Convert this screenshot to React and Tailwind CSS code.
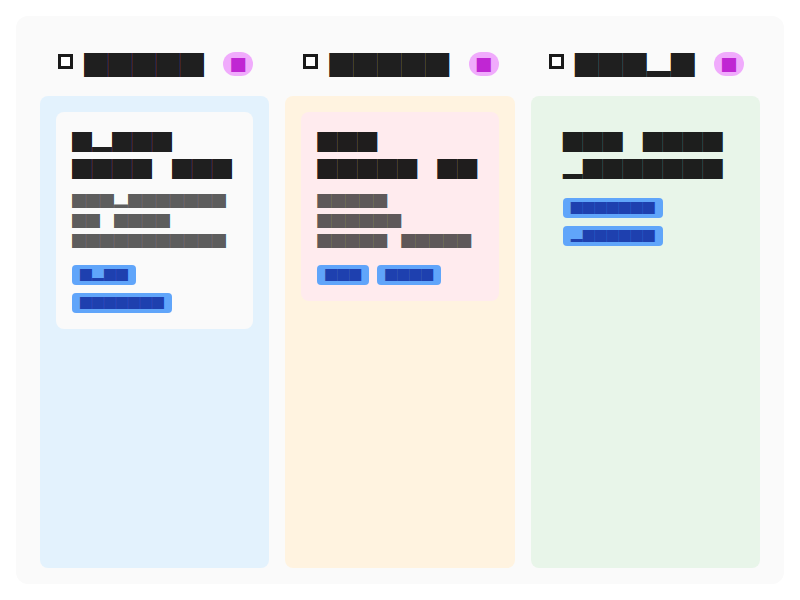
import React from "react";

const F = "█";
const L = "▂";
const S = "\u3000";

const font = { fontFamily: '"Noto Sans CJK SC", "Noto Sans CJK JP", sans-serif' };

const columns = [
  {
    title: F + F + F + F + F,
    colBg: "bg-[#e3f2fd]",
    cards: [
      {
        bg: "bg-[#fafafa]",
        title: [F + L + F + F + F, F + F + F + F + S + F + F + F],
        desc: [F + F + F + L + F + F + F + F + F + F + F, F + F + S + F + F + F + F, F + F + F + F + F + F + F + F + F + F + F],
        tags: [F + L + F + F, F + F + F + F + F + F + F],
      },
    ],
  },
  {
    title: F + F + F + F + F,
    colBg: "bg-[#fff3e0]",
    cards: [
      {
        bg: "bg-[#ffebee]",
        title: [F + F + F, F + F + F + F + F + S + F + F],
        desc: [F + F + F + F + F, F + F + F + F + F + F, F + F + F + F + F + S + F + F + F + F + F],
        tags: [F + F + F, F + F + F + F],
      },
    ],
  },
  {
    title: F + F + F + L + F,
    colBg: "bg-[#e8f5e9]",
    cards: [
      {
        bg: "bg-[#e8f5e9]",
        title: [F + F + F + S + F + F + F + F, L + F + F + F + F + F + F + F],
        desc: [],
        tags: [F + F + F + F + F + F + F, L + F + F + F + F + F + F],
      },
    ],
  },
];

function Card({ card }) {
  return (
    <div className={`${card.bg} rounded-lg p-4`}>
      <div className="text-[20px] leading-[27px] text-black/90 whitespace-pre">
        {card.title.map((t, i) => (
          <div key={i}>{t}</div>
        ))}
      </div>
      {card.desc.length > 0 && (
        <div className="mt-2 text-[14px] leading-5 text-black/65 whitespace-pre">
          {card.desc.map((t, i) => (
            <div key={i}>{t}</div>
          ))}
        </div>
      )}
      <div className={`${card.desc.length > 0 ? "mt-[15px]" : "mt-4"} flex flex-wrap gap-2`}>
        {card.tags.map((t, i) => (
          <span
            key={i}
            className="rounded bg-[#60a5fa] px-2 py-0.5 text-[12px] leading-4 text-[#1e40af] whitespace-pre"
          >
            {t}
          </span>
        ))}
      </div>
    </div>
  );
}

export default function App() {
  return (
    <div className="w-[800px] h-[600px] bg-white p-4" style={font}>
      <div className="h-full rounded-xl bg-[#fafafa] px-6 pt-6 pb-4 grid grid-cols-3 gap-4">
        {columns.map((col, i) => (
          <div key={i} className="flex flex-col gap-2 min-h-0">
            <div className="flex items-center py-2 pl-[18px] pr-4">
              <span className="w-[15px] h-[15px] border-[3px] border-[#1a1a1a] bg-white -mt-[5px]" />
              <span className="ml-[11px] text-[24px] leading-8 text-black/90 whitespace-pre">{col.title}</span>
              <span className="ml-auto rounded-full bg-[#f0abfc] px-2 py-0.5 text-[14px] leading-5 text-[#c026d3]">
                {F}
              </span>
            </div>
            <div className={`${col.colBg} flex-1 rounded-lg p-4 flex flex-col gap-3`}>
              {col.cards.map((c, j) => (
                <Card key={j} card={c} />
              ))}
            </div>
          </div>
        ))}
      </div>
    </div>
  );
}
